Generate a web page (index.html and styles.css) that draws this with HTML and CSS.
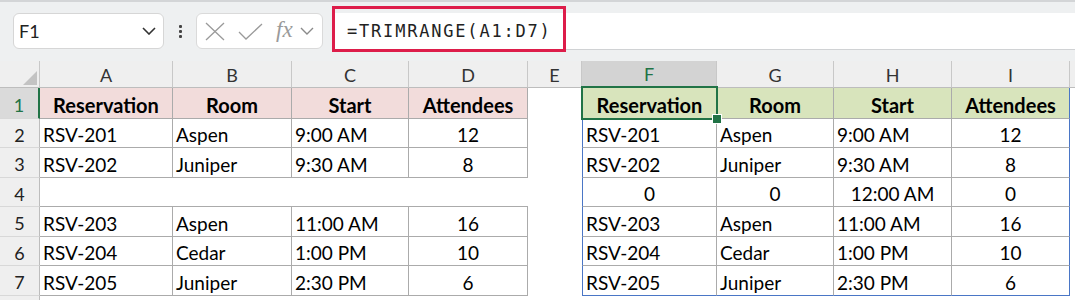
FILE: index.html
```html
<!DOCTYPE html>
<html>
<head>
<meta charset="utf-8">
<link rel="stylesheet" href="styles.css">
</head>
<body>
<div class="app">
  <div class="fbar">
    <div class="namebox">
      <span class="nb-text">F1</span>
      <svg class="chev" width="14" height="8" viewBox="0 0 14 8"><path d="M1 1 L7 7 L13 1" fill="none" stroke="#333" stroke-width="1.6"/></svg>
    </div>
    <div class="dots"><i></i><i></i><i></i></div>
    <div class="fxbox">
      <svg class="ico-x" width="20" height="19" viewBox="0 0 20 19"><path d="M1 1 L19 18 M19 1 L1 18" fill="none" stroke="#9a9a9a" stroke-width="1.3"/></svg>
      <svg class="ico-ok" width="25" height="17" viewBox="0 0 25 17"><path d="M1 9 L8 16 L24 1" fill="none" stroke="#9a9a9a" stroke-width="1.3"/></svg>
      <span class="fx">fx</span>
      <svg class="chev2" width="14" height="8" viewBox="0 0 14 8"><path d="M1 1 L7 7 L13 1" fill="none" stroke="#8a8a8a" stroke-width="1.4"/></svg>
    </div>
    <div class="formula">
      <span class="ftext">=TRIMRANGE(A1:D7)</span>
      <div class="hl"></div>
    </div>
  </div>

  <div class="sheet">
    <!-- column headers -->
    <div class="ch corner"><svg width="14" height="14" viewBox="0 0 14 14"><polygon points="14,0 14,14 0,14" fill="#c3c3c3"/></svg></div>
    <div class="ch">A</div>
    <div class="ch">B</div>
    <div class="ch">C</div>
    <div class="ch">D</div>
    <div class="ch">E</div>
    <div class="ch ch-sel">F</div>
    <div class="ch">G</div>
    <div class="ch">H</div>
    <div class="ch">I</div>
    <div class="ch ch-end"></div>

    <!-- row 1 -->
    <div class="rh rh-sel">1</div>
    <div class="c hp">Reservation</div>
    <div class="c hp">Room</div>
    <div class="c hp">Start</div>
    <div class="c hp">Attendees</div>
    <div class="e"></div>
    <div class="c hg sl sel">Reservation<div class="selbox"></div><div class="handle"></div></div>
    <div class="c hg">Room</div>
    <div class="c hg">Start</div>
    <div class="c hg sr">Attendees</div>
    <div class="e"></div>

    <!-- row 2 -->
    <div class="rh">2</div>
    <div class="c">RSV-201</div>
    <div class="c">Aspen</div>
    <div class="c">9:00 AM</div>
    <div class="c ctr">12</div>
    <div class="e"></div>
    <div class="c sl">RSV-201</div>
    <div class="c">Aspen</div>
    <div class="c">9:00 AM</div>
    <div class="c ctr sr">12</div>
    <div class="e"></div>

    <!-- row 3 -->
    <div class="rh">3</div>
    <div class="c">RSV-202</div>
    <div class="c">Juniper</div>
    <div class="c">9:30 AM</div>
    <div class="c ctr">8</div>
    <div class="e"></div>
    <div class="c sl">RSV-202</div>
    <div class="c">Juniper</div>
    <div class="c">9:30 AM</div>
    <div class="c ctr sr">8</div>
    <div class="e"></div>

    <!-- row 4 -->
    <div class="rh">4</div>
    <div class="bo"></div>
    <div class="bo"></div>
    <div class="bo"></div>
    <div class="bo"></div>
    <div class="e"></div>
    <div class="c ctr sl">0</div>
    <div class="c ctr">0</div>
    <div class="c ctr">12:00 AM</div>
    <div class="c ctr sr">0</div>
    <div class="e"></div>

    <!-- row 5 -->
    <div class="rh">5</div>
    <div class="c">RSV-203</div>
    <div class="c">Aspen</div>
    <div class="c">11:00 AM</div>
    <div class="c ctr">16</div>
    <div class="e"></div>
    <div class="c sl">RSV-203</div>
    <div class="c">Aspen</div>
    <div class="c">11:00 AM</div>
    <div class="c ctr sr">16</div>
    <div class="e"></div>

    <!-- row 6 -->
    <div class="rh">6</div>
    <div class="c">RSV-204</div>
    <div class="c">Cedar</div>
    <div class="c">1:00 PM</div>
    <div class="c ctr">10</div>
    <div class="e"></div>
    <div class="c sl">RSV-204</div>
    <div class="c">Cedar</div>
    <div class="c">1:00 PM</div>
    <div class="c ctr sr">10</div>
    <div class="e"></div>

    <!-- row 7 -->
    <div class="rh">7</div>
    <div class="c">RSV-205</div>
    <div class="c">Juniper</div>
    <div class="c">2:30 PM</div>
    <div class="c ctr">6</div>
    <div class="e"></div>
    <div class="c sl sb">RSV-205</div>
    <div class="c sb">Juniper</div>
    <div class="c sb">2:30 PM</div>
    <div class="c ctr sr sb">6</div>
    <div class="e"></div>

    <!-- row 8 (partial, cut by window edge) -->
    <div class="rh"></div>
    <div class="e"></div>
    <div class="e"></div>
    <div class="e"></div>
    <div class="e"></div>
    <div class="e"></div>
    <div class="e"></div>
    <div class="e"></div>
    <div class="e"></div>
    <div class="e"></div>
    <div class="e"></div>
  </div>
</div>
</body>
</html>
```

FILE: styles.css
```css
* { box-sizing: border-box; }
html, body { margin: 0; padding: 0; }
body {
  width: 1075px;
  height: 300px;
  overflow: hidden;
  background: #eef0f1;
  font-family: Lato, "Liberation Sans", sans-serif;
}
.app { width: 1075px; height: 300px; border-top: 2px solid #d3d5d7; }

/* formula bar */
.fbar {
  height: 59px;
  display: flex;
  align-items: flex-start;
  padding-top: 11px;
  position: relative;
}
.namebox {
  margin-left: 13px;
  width: 151px;
  height: 36px;
  background: #fff;
  border: 1px solid #d6d6d6;
  border-radius: 6px;
  display: flex;
  align-items: center;
  justify-content: space-between;
  padding: 0 7px 0 5px;
}
.nb-text { font-size: 18px; color: #222; }
.chev { display: block; }
.dots {
  width: 32px;
  height: 36px;
  display: flex;
  flex-direction: column;
  align-items: center;
  justify-content: center;
  gap: 2px;
}
.dots i { display: block; width: 3px; height: 3px; background: #444; border-radius: 1px; }
.fxbox {
  width: 127px;
  height: 36px;
  background: #fff;
  border: 1px solid #dadada;
  border-radius: 6px;
  display: flex;
  align-items: center;
  padding-left: 8px;
}
.ico-x { display: block; margin-right: 13px; }
.ico-ok { display: block; margin-right: 13px; }
.fx {
  font-family: "Liberation Serif", "DejaVu Serif", serif;
  font-style: italic;
  font-size: 23px;
  color: #9a9a9a;
  margin-right: 7px;
  line-height: 1;
  padding-bottom: 3px;
}
.chev2 { display: block; }
.formula {
  margin-left: 10px;
  flex: 1;
  height: 37px;
  background: #fff;
  border-bottom: 1px solid #d0d2d4;
  position: relative;
  display: flex;
  align-items: center;
  padding-left: 14px;
}
.ftext {
  font-family: "DejaVu Sans Mono", monospace;
  font-size: 17px;
  letter-spacing: 1.8px;
  color: #222;
}
.hl {
  position: absolute;
  left: -1px;
  top: -7px;
  width: 234px;
  height: 46px;
  border: 3px solid #dd1d4a;
}

/* sheet */
.sheet {
  display: grid;
  grid-template-columns: 40px 133px 119px 117px 119px 54px 135px 117px 118px 118px 5px;
  grid-template-rows: 27px 31px 29px 30px 29px 30px 29px 30px 10px;
  background: #fff;
}
.ch {
  background: #efefef;
  border-right: 1px solid #c8c8c8;
  border-bottom: 1px solid #bdbdbd;
  display: flex;
  align-items: center;
  justify-content: center;
  font-size: 18px;
  color: #333;
  padding-top: 1px;
}
.corner { align-items: flex-end; justify-content: flex-end; padding: 0 2px 2px 0; }
.corner svg { display: block; }
.ch-sel { background: #d3d3d3; color: #217346; border-bottom: 2px solid #217346; }
.ch-end { border-right: none; }
.rh {
  background: #efefef;
  border-right: 1px solid #bdbdbd;
  border-bottom: 1px solid #d8d8d8;
  display: flex;
  align-items: center;
  justify-content: center;
  font-size: 18px;
  color: #222;
  padding-top: 3px;
}
.rh-sel { background: #dadada; color: #217346; border-right: 2px solid #217346; }

.c {
  border-right: 1px solid #ababab;
  border-bottom: 1px solid #ababab;
  display: flex;
  align-items: center;
  padding: 3px 0 0 3px;
  font-size: 19px;
  color: #000;
  white-space: nowrap;
  position: relative;
}
.ctr { justify-content: center; padding-left: 0; }
.hp { background: #f2dcdb; font-weight: 700; font-size: 20px; justify-content: center; padding-left: 0; }
.hg { background: #d8e4bc; font-weight: 700; font-size: 20px; justify-content: center; padding-left: 0; }
.bo { border-bottom: 1px solid #ababab; }
.e { }
.sl { border-left: 1px solid #4a76c6; }
.sr { border-right: 1px solid #4a76c6; }
.sb { border-bottom: 1px solid #4a76c6; }

.sel { z-index: 5; overflow: visible; }
.selbox {
  position: absolute;
  left: -2px;
  top: -2px;
  right: -2px;
  bottom: -2px;
  border: 2px solid #217346;
  pointer-events: none;
}
.handle {
  position: absolute;
  z-index: 6;
  right: -6px;
  bottom: -6px;
  width: 10px;
  height: 10px;
  background: #217346;
  border: 1px solid #fff;
}
```
